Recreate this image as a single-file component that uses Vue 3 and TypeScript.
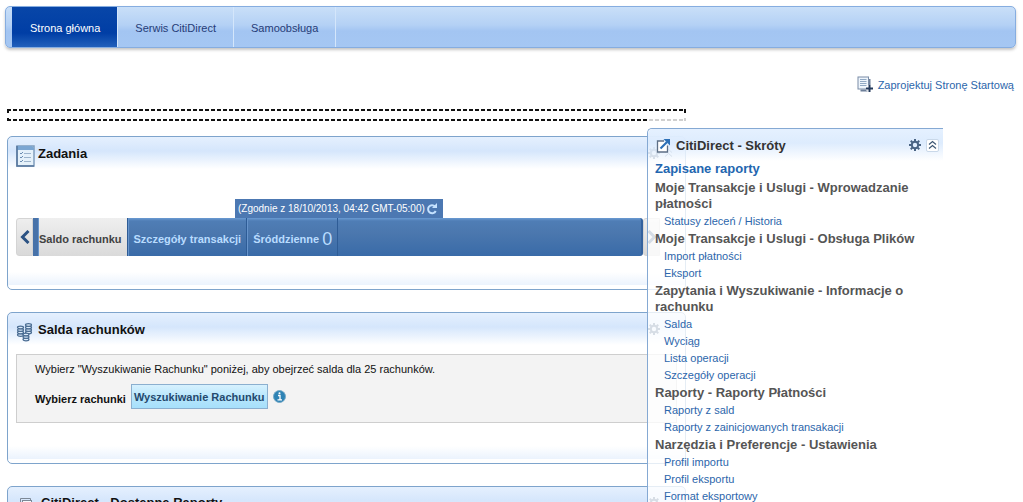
<script setup lang="ts">
import { ref } from 'vue'

interface ShortcutGroup {
  title: string
  items: string[]
}

const tabs: string[] = ['Strona główna', 'Serwis CitiDirect', 'Samoobsługa']
const activeTab = ref<string>(tabs[0])

const groups: ShortcutGroup[] = [
  { title: 'Moje Transakcje i Uslugi - Wprowadzanie płatności', items: ['Statusy zleceń / Historia'] },
  { title: 'Moje Transakcje i Uslugi - Obsługa Plików', items: ['Import płatności', 'Eksport'] },
  {
    title: 'Zapytania i Wyszukiwanie - Informacje o rachunku',
    items: ['Salda', 'Wyciąg', 'Lista operacji', 'Szczegóły operacji'],
  },
  { title: 'Raporty - Raporty Płatności', items: ['Raporty z sald', 'Raporty z zainicjowanych transakacji'] },
  { title: 'Narzędzia i Preferencje - Ustawienia', items: ['Profil importu', 'Profil eksportu', 'Format eksportowy'] },
]

const gearTeeth: number[] = [0, 45, 90, 135, 180, 225, 270, 315]
</script>

<template>
  <div class="page">
    <nav class="nav">
      <button
        v-for="tab in tabs"
        :key="tab"
        type="button"
        class="tab"
        :class="{ active: tab === activeTab }"
        @click="activeTab = tab"
      >
        {{ tab }}
      </button>
    </nav>

    <div class="tools">
      <a href="#" class="design">
        <svg width="17" height="17" viewBox="0 0 17 17" aria-hidden="true">
          <path d="M3.500 14.500h8M12.500 3v7" stroke="#6d7f99" stroke-width="2" fill="none" />
          <rect x="1" y="1" width="10.500" height="12" fill="#eef5fc" stroke="#7a8ca6" />
          <path d="M3 3.500h6.500M3 5.500h6.500M3 7.500h6.500M3 9.500h6.500" stroke="#91a9c4" />
          <path d="M12.500 9v7M9 12.500h7" stroke="#fff" stroke-width="4" />
          <path d="M12.500 9v7M9 12.500h7" stroke="#243a5c" stroke-width="2" />
        </svg>
        <span>Zaprojektuj Stronę Startową</span>
      </a>
    </div>

    <div class="workspace">
      <main class="column">
        <div class="dropzone"></div>

        <section class="card">
          <header class="card-head">
            <svg class="card-icon" width="20" height="22" viewBox="0 0 20 22" aria-hidden="true">
              <rect x="1" y="1" width="17" height="20" fill="#e5f1fa" stroke="#7f9dbd" stroke-width="1.500" />
              <path d="M1 1h15l2 2v2H1z" fill="#7ba6d2" />
              <path d="M1 1v20h17" fill="none" stroke="#55769c" stroke-width="1.500" />
              <path d="M4 8l1 1 2-2M4 12l1 1 2-2M4 16l1 1 2-2" stroke="#6b8db2" fill="none" />
              <path d="M8 8.500h7M8 12.500h7M8 16.500h7" stroke="#9db4cc" />
            </svg>
            <h2>Zadania</h2>
            <button type="button" class="icon-button" aria-label="Ustawienia">
              <svg width="12" height="12" viewBox="-6 -6 12 12">
                <rect v-for="a in gearTeeth" :key="a" x="-1" y="-6" width="2" height="3" :transform="`rotate(${a})`" fill="#35557f" />
                <circle r="3.200" fill="none" stroke="#35557f" stroke-width="2" />
              </svg>
            </button>
            <button type="button" class="icon-button" aria-label="Zwiń">
              <svg width="9" height="10" viewBox="0 0 9 10">
                <path d="M1 4.500l3.500-3 3.500 3M1 8.500l3.500-3 3.500 3" fill="none" stroke="#35557f" />
              </svg>
            </button>
          </header>
          <div class="tasks">
            <div class="stamp">
              <span>(Zgodnie z 18/10/2013, 04:42 GMT-05:00)</span>
              <button type="button" class="icon-button" aria-label="Odśwież">
                <svg width="12" height="12" viewBox="0 0 12 12">
                  <path d="M9 3.500A4 4 0 1 0 9.700 8" fill="none" stroke="#c5e2ff" stroke-width="2" />
                  <path d="M11 0v5H6z" fill="#c5e2ff" />
                </svg>
              </button>
            </div>
            <div class="carousel">
              <button type="button" class="arrow" aria-label="Poprzednie">
                <svg width="10" height="14" viewBox="0 0 10 14"><path d="M8.500 1L2.500 7l6 6" fill="none" stroke="#2b5283" stroke-width="3" /></svg>
              </button>
              <div class="track">
                <button type="button" class="task current">Saldo rachunku</button>
                <button type="button" class="task">Szczegóły transakcji</button>
                <button type="button" class="task">Śróddzienne <span class="count">0</span></button>
              </div>
              <button type="button" class="arrow" aria-label="Następne">
                <svg width="10" height="14" viewBox="0 0 10 14"><path d="M1.500 1l6 6-6 6" fill="none" stroke="#2b5283" stroke-width="3" /></svg>
              </button>
            </div>
          </div>
        </section>

        <section class="card">
          <header class="card-head">
            <svg class="card-icon" width="20" height="20" viewBox="0 0 20 20" aria-hidden="true">
              <g fill="#dcebfa" stroke="#4a6c92" stroke-width="1.200">
                <ellipse cx="12.500" cy="10.500" rx="3" ry="1.300" />
                <ellipse cx="12.500" cy="8" rx="3" ry="1.300" />
                <ellipse cx="12.500" cy="5.500" rx="3" ry="1.300" />
                <ellipse cx="12.500" cy="3" rx="3" ry="1.300" />
                <ellipse cx="4.500" cy="13" rx="3" ry="1.300" />
                <ellipse cx="4.500" cy="10.500" rx="3" ry="1.300" />
                <ellipse cx="4.500" cy="8" rx="3" ry="1.300" />
                <ellipse cx="4.500" cy="5.500" rx="3" ry="1.300" />
                <ellipse cx="10" cy="17.500" rx="3" ry="1.300" />
                <ellipse cx="10" cy="15" rx="3" ry="1.300" />
                <ellipse cx="10" cy="12.500" rx="3" ry="1.300" />
              </g>
            </svg>
            <h2>Salda rachunków</h2>
            <button type="button" class="icon-button single" aria-label="Ustawienia">
              <svg width="12" height="12" viewBox="-6 -6 12 12">
                <rect v-for="a in gearTeeth" :key="a" x="-1" y="-6" width="2" height="3" :transform="`rotate(${a})`" fill="#35557f" />
                <circle r="3.200" fill="none" stroke="#35557f" stroke-width="2" />
              </svg>
            </button>
          </header>
          <div class="search">
            <p>Wybierz "Wyszukiwanie Rachunku" poniżej, aby obejrzeć salda dla 25 rachunków.</p>
            <div class="search-row">
              <label for="account-search">Wybierz rachunki</label>
              <button id="account-search" type="button" class="primary">Wyszukiwanie Rachunku</button>
              <svg width="13" height="13" viewBox="0 0 13 13" aria-hidden="true">
                <circle cx="6.500" cy="6.500" r="6" fill="#2e83b5" stroke="#76a9c6" />
                <path d="M5 5.500h2v4M4.500 9.800h4.500" fill="none" stroke="#fff" stroke-width="1.300" />
                <circle cx="6.500" cy="3.300" r="1" fill="#fff" />
              </svg>
            </div>
          </div>
        </section>

        <section class="card">
          <header class="card-head reports-head">
            <svg class="card-icon" width="20" height="20" viewBox="0 0 20 20" aria-hidden="true">
              <path d="M4.500 14V3.500h10v2" fill="none" stroke="#7d8997" />
              <rect x="6.500" y="5.500" width="9" height="12" fill="#f6f9fc" stroke="#7d8997" />
              <path d="M8 8.500h6M8 11.500h6" stroke="#7d8997" />
            </svg>
            <h2>CitiDirect - Dostępne Raporty</h2>
            <button type="button" class="icon-button single" aria-label="Ustawienia">
              <svg width="12" height="12" viewBox="-6 -6 12 12">
                <rect v-for="a in gearTeeth" :key="a" x="-1" y="-6" width="2" height="3" :transform="`rotate(${a})`" fill="#35557f" />
                <circle r="3.200" fill="none" stroke="#35557f" stroke-width="2" />
              </svg>
            </button>
          </header>
          <div class="reports"></div>
        </section>
      </main>

      <aside class="floating">
        <div class="shortcuts">
          <header class="shortcuts-head">
            <svg width="15" height="15" viewBox="0 0 15 15" aria-hidden="true">
              <path d="M8 3H1.500v11h10V7.500" fill="#fff" stroke="#5d6f86" stroke-width="1.300" />
              <path d="M4.500 10.500L11 4" stroke="#2d70b7" stroke-width="2.200" />
              <path d="M7.500 1H14v6.500z" fill="#2d70b7" />
            </svg>
            <h2>CitiDirect - Skróty</h2>
            <button type="button" class="icon-button" aria-label="Ustawienia skrótów">
              <svg width="12" height="12" viewBox="-6 -6 12 12">
                <rect v-for="a in gearTeeth" :key="a" x="-1" y="-6" width="2" height="3" :transform="`rotate(${a})`" fill="#4a6484" />
                <circle r="3.200" fill="none" stroke="#4a6484" stroke-width="2" />
              </svg>
            </button>
            <button type="button" class="icon-button collapse" aria-label="Zwiń skróty">
              <svg width="9" height="10" viewBox="0 0 9 10">
                <path d="M1 4.500l3.500-3 3.500 3M1 8.500l3.500-3 3.500 3" fill="none" stroke="#3e5774" stroke-width="1.200" />
              </svg>
            </button>
          </header>
          <div class="shortcuts-body">
            <h3><a href="#">Zapisane raporty</a></h3>
            <section v-for="group in groups" :key="group.title" class="group">
              <h3>{{ group.title }}</h3>
              <ul>
                <li v-for="item in group.items" :key="item"><a href="#">{{ item }}</a></li>
              </ul>
            </section>
          </div>
        </div>
      </aside>
    </div>
  </div>
</template>

<style>
html,
body {
  margin: 0;
  background: #fff;
}
</style>

<style scoped>
.page {
  box-sizing: border-box;
  height: 100vh;
  overflow: hidden;
  padding: 6px 7px 0;
  font-family: 'Liberation Sans', Arial, sans-serif;
  font-size: 11px;
  color: #111;
}

button {
  font-family: inherit;
  font-size: 11px;
  margin: 0;
  padding: 0;
  border: 0;
  background: none;
  white-space: nowrap;
  cursor: pointer;
}

h2,
h3,
p,
ul {
  margin: 0;
  padding: 0;
}

a {
  color: #2c66ab;
  text-decoration: none;
}

svg {
  display: block;
  flex: none;
}

.nav {
  display: flex;
  height: 40px;
  margin: 0 0 0 -2px;
  padding-left: 6px;
  border: 1px solid #86ade0;
  border-radius: 5px;
  background: linear-gradient(#c9dff8, #b4d1f5 45%, #a3c5f2 60%, #a5c7f3);
  box-shadow: 0 2px 3px #c6c6c6;
}

.tab {
  padding: 2px 17px 0;
  border-right: 1px solid #d4e6fb;
  color: #263c77;
}

.tab.active {
  padding-left: 18px;
  background: linear-gradient(#0846a8, #003ea5 65%, #2160bb);
  color: #fff;
}

.tools {
  display: flex;
  justify-content: flex-end;
  padding: 28px 2px 16px;
}

.design {
  display: flex;
  align-items: center;
  gap: 4px;
}

.workspace {
  position: relative;
}

.column {
  display: flex;
  flex-direction: column;
  gap: 22px;
  width: 68%;
}

.dropzone {
  height: 12px;
  margin: 0 7px -7px 0;
  background:
    repeating-linear-gradient(90deg, #111 0 4px, transparent 4px 6px) top / 100% 2px no-repeat,
    repeating-linear-gradient(90deg, #111 0 4px, transparent 4px 6px) bottom / 100% 2px no-repeat,
    linear-gradient(#111 0 4px, transparent 4px 9px, #111 9px) left / 2px 100% no-repeat,
    linear-gradient(#111 0 4px, transparent 4px 9px, #111 9px) right / 2px 100% no-repeat;
}

.card {
  padding: 0 8px;
  margin-right: 7px;
  border: 1px solid #7ea4cc;
  border-radius: 5px;
  background: linear-gradient(#e5f0fe, #d5e6fc 14px, #fff 32px, #fff calc(100% - 17px), #ebf3fd calc(100% - 4px), #fff calc(100% - 4px));
}

.card-head {
  display: flex;
  align-items: center;
  height: 32px;
}

.reports-head {
  height: 31px;
}

.card-icon {
  margin-top: 5px;
}

.card-head h2 {
  flex: 1;
  margin-left: 2px;
  padding-top: 2px;
  font-size: 13px;
  line-height: 16px;
}

.reports-head h2 {
  margin-left: 5px;
  padding-top: 0;
}

.icon-button {
  display: flex;
  align-items: center;
  justify-content: center;
}

.card-head .icon-button {
  margin-right: 4px;
}

.card-head .icon-button.single {
  margin-right: 17px;
}

.tasks {
  padding: 30px 17px 33px 0;
}

.stamp {
  display: flex;
  align-items: center;
  justify-content: space-between;
  box-sizing: border-box;
  width: 208px;
  height: 19px;
  margin-left: 34%;
  padding: 0 5px 0 3px;
  background: #4c78b2;
  color: #fff;
  font-size: 10px;
  white-space: nowrap;
}

.carousel {
  display: flex;
  height: 38px;
}

.arrow {
  display: flex;
  align-items: center;
  justify-content: center;
  width: 17px;
  border: 1px solid #d4d4d4;
  border-radius: 3px 0 0 3px;
  background: linear-gradient(#eee, #d9d9d9);
}

.track {
  display: flex;
  flex: 1;
  border-left: 5px solid #4772a9;
  border-right: 2px solid #34629e;
  border-radius: 0 3px 3px 0;
  background: linear-gradient(#6a9bd3, #4f7db5 3px, #4b77ae 40%, #396ba8);
}

.task {
  display: flex;
  align-items: center;
  padding: 3px 5px 0;
  border-right: 1px solid #2e5c96;
  border-left: 1px solid #6794cb;
  color: #b9dcff;
  font-weight: bold;
}

.task.current {
  padding-left: 0;
  background: linear-gradient(#efefef, #dadada);
  color: #424242;
}

.count {
  margin-left: 3px;
  font-size: 18px;
  font-weight: normal;
  line-height: 20px;
}

.search {
  margin: 9px 0 40px;
  padding: 7px 18px 13px;
  border: 1px solid #cecece;
  background: #f3f3f3;
}

.search p {
  line-height: 14px;
}

.search-row {
  display: flex;
  align-items: center;
  gap: 5px;
  margin-top: 8px;
}

.search-row label {
  margin-top: 5px;
  font-weight: bold;
}

.primary {
  height: 25px;
  padding: 0 2px;
  border: 1px solid #8bafcf;
  background: linear-gradient(#d7f1fe, #b8e6fc 50%, #a6e0fb);
  color: #25496d;
  font-weight: bold;
}

.reports {
  height: 100px;
}

.floating {
  position: absolute;
  top: 8px;
  left: 640px;
  width: 296px;
  padding-top: 11px;
  background: rgba(255, 255, 255, 0.8);
}

.shortcuts {
  border-top: 1px solid #85a9d3;
  border-left: 1px solid #85a9d3;
  border-radius: 5px 0 0 0;
}

.shortcuts-head {
  display: flex;
  align-items: center;
  height: 32px;
  padding: 0 4px 0 8px;
  border-radius: 5px 0 0 0;
  background: linear-gradient(rgba(226, 239, 255, 0.9), rgba(213, 231, 253, 0.8) 14px, rgba(255, 255, 255, 0));
}

.shortcuts-head h2 {
  flex: 1;
  margin-left: 5px;
  padding-top: 1px;
  color: #333;
  font-size: 13px;
  line-height: 16px;
}

.collapse {
  width: 13px;
  height: 13px;
  margin-left: 5px;
  border: 1px solid #c9d8e9;
  border-radius: 2px;
  background: #fff;
}

.shortcuts-body {
  padding: 0 12px 12px 7px;
}

.shortcuts-body h3 {
  color: #555;
  font-size: 13px;
  line-height: 16px;
}

.shortcuts-body h3 a {
  display: block;
  padding-bottom: 3px;
  color: #2366b0;
}

.group {
  margin-bottom: 1px;
}

.group ul {
  margin-top: 1px;
  padding-left: 9px;
  list-style: none;
}

.group li {
  line-height: 17px;
}
</style>
